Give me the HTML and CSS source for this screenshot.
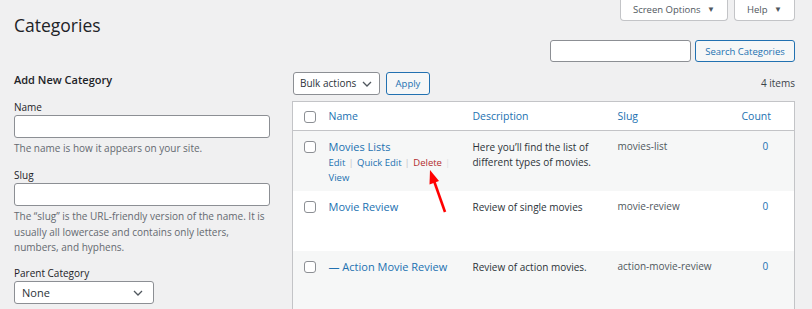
FILE: index.html
```html
<!DOCTYPE html>
<html lang="en">
<head>
    <meta charset="UTF-8">
    <title>Categories</title>
    <link rel="stylesheet" href="styles.css">
</head>
<body>

<div class="wrap">
    <div class="top">
        <h1>Categories</h1>
        <div class="top-right">
            <div class="meta-links">
                <button class="meta-tab">Screen Options <span class="tri">&#9660;</span></button>
                <button class="meta-tab help">Help <span class="tri">&#9660;</span></button>
            </div>
            <div class="search-box">
                <input type="text" class="search-input">
                <button class="btn btn-outline">Search Categories</button>
            </div>
        </div>
    </div>

    <div class="columns">
        <div class="col-left">
            <h2>Add New Category</h2>
            <div class="field">
                <label>Name</label>
                <input type="text" class="text-input">
                <p class="description">The name is how it appears on your site.</p>
            </div>
            <div class="field field-slug">
                <label>Slug</label>
                <input type="text" class="text-input">
                <p class="description">The “slug” is the URL-friendly version of the name. It is usually all lowercase and contains only letters, numbers, and hyphens.</p>
            </div>
            <div class="field">
                <label>Parent Category</label>
                <div class="select select-parent">
                    <span>None</span>
                    <svg width="10" height="6" viewBox="0 0 10 6"><path d="M1 1l4 4 4-4" fill="none" stroke="#50575e" stroke-width="1.3"/></svg>
                </div>
            </div>
        </div>

        <div class="col-right">
            <div class="tablenav">
                <div class="select select-bulk">
                    <span>Bulk actions</span>
                    <svg width="10" height="6" viewBox="0 0 10 6"><path d="M1 1l4 4 4-4" fill="none" stroke="#50575e" stroke-width="1.3"/></svg>
                </div>
                <button class="btn btn-outline btn-apply">Apply</button>
                <span class="count-items">4 items</span>
            </div>

            <table class="list-table">
                <colgroup>
                    <col class="c-cb">
                    <col class="c-name">
                    <col class="c-desc">
                    <col class="c-slug">
                    <col class="c-count">
                </colgroup>
                <thead>
                    <tr>
                        <th class="cb"><span class="check"></span></th>
                        <th><a href="#">Name</a></th>
                        <th><a href="#">Description</a></th>
                        <th><a href="#">Slug</a></th>
                        <th><a href="#">Count</a></th>
                    </tr>
                </thead>
                <tbody>
                    <tr class="alt">
                        <td class="cb"><span class="check"></span></td>
                        <td>
                            <a href="#" class="row-title">Movies Lists</a>
                            <div class="row-actions">
                                <span class="act"><a href="#">Edit</a><span class="sep">|</span></span>
                                <span class="act"><a href="#">Quick Edit</a><span class="sep">|</span></span>
                                <span class="act"><a href="#" class="delete">Delete</a><span class="sep dotted">|</span></span>
                                <span class="act"><a href="#">View</a></span>
                            </div>
                        </td>
                        <td class="desc">Here you’ll find the list of different types of movies.</td>
                        <td class="slug">movies-list</td>
                        <td class="num"><a href="#">0</a></td>
                    </tr>
                    <tr>
                        <td class="cb"><span class="check"></span></td>
                        <td>
                            <a href="#" class="row-title">Movie Review</a>
                            <div class="row-actions hidden">
                                <span class="act"><a href="#">Edit</a><span class="sep">|</span></span>
                                <span class="act"><a href="#">Quick Edit</a><span class="sep">|</span></span>
                                <span class="act"><a href="#">Delete</a><span class="sep">|</span></span>
                                <span class="act"><a href="#">View</a></span>
                            </div>
                        </td>
                        <td class="desc">Review of single movies</td>
                        <td class="slug">movie-review</td>
                        <td class="num"><a href="#">0</a></td>
                    </tr>
                    <tr class="alt">
                        <td class="cb"><span class="check"></span></td>
                        <td>
                            <a href="#" class="row-title">— Action Movie Review</a>
                            <div class="row-actions hidden">
                                <span class="act"><a href="#">Edit</a><span class="sep">|</span></span>
                                <span class="act"><a href="#">Quick Edit</a><span class="sep">|</span></span>
                                <span class="act"><a href="#">Delete</a><span class="sep">|</span></span>
                                <span class="act"><a href="#">View</a></span>
                            </div>
                        </td>
                        <td class="desc">Review of action movies.</td>
                        <td class="slug">action-movie-review</td>
                        <td class="num"><a href="#">0</a></td>
                    </tr>
                </tbody>
            </table>
        </div>
    </div>
</div>

<!-- red annotation arrow drawn over the screenshot -->
<svg class="arrow" width="812" height="309" viewBox="0 0 812 309">
    <line x1="445" y1="212" x2="433" y2="178" stroke="#f00" stroke-width="2.6"/>
    <polygon points="430,170 439,181 429.5,184.5" fill="#f00"/>
</svg>

</body>
</html>
```

FILE: styles.css
```css
* {
    margin: 0;
    padding: 0;
    box-sizing: border-box;
}

body {
    font-family: 'Open Sans', 'Noto Sans', sans-serif;
    font-size: 10px;
    line-height: 15px;
    background-color: #f0f0f1;
    color: #3c434a;
    position: relative;
    width: 812px;
    height: 309px;
    overflow: hidden;
}

a {
    color: #2271b1;
    text-decoration: none;
}

button {
    font-family: inherit;
}

.wrap {
    padding: 0 17px 0 14px;
}

/* header area */

.top {
    display: flex;
    justify-content: space-between;
    align-items: flex-start;
    height: 70px;
}

h1 {
    font-size: 17.5px;
    font-weight: 400;
    color: #1d2327;
    line-height: 24px;
    margin-top: 13px;
}

.top-right {
    display: flex;
    flex-direction: column;
    align-items: flex-end;
}

.meta-links {
    display: flex;
    gap: 6px;
    margin-top: -1px;
}

.meta-tab {
    height: 22px;
    background: #fff;
    border: 1px solid #c3c4c7;
    border-top: none;
    border-radius: 0 0 4px 4px;
    color: #50575e;
    font-size: 9.5px;
    padding: 0;
    width: 108px;
}

.meta-tab.help {
    width: 61px;
}

.tri {
    font-size: 8px;
    margin-left: 4px;
    vertical-align: 1px;
}

.search-box {
    display: flex;
    gap: 4px;
    margin-top: 19px;
}

.search-input {
    width: 141px;
    height: 22px;
    border: 1px solid #8c8f94;
    border-radius: 3px;
    background: #fff;
}

.btn {
    height: 22px;
    border-radius: 3px;
    font-size: 9.5px;
    cursor: pointer;
}

.btn-outline {
    background: #f6f7f7;
    border: 1px solid #2271b1;
    color: #2271b1;
    width: 100px;
}

/* two columns */

.columns {
    display: flex;
    gap: 22px;
}

.col-left {
    width: 256px;
    flex: none;
}

.col-right {
    flex: 1;
}

h2 {
    font-size: 11px;
    font-weight: 600;
    color: #1d2327;
    line-height: 20px;
    margin-bottom: 10px;
}

.field {
    margin-bottom: 12px;
}

.field-slug {
    margin-bottom: 11px;
}

.field label {
    display: block;
    color: #1d2327;
    line-height: 14px;
    margin-bottom: 1px;
}

.text-input {
    display: block;
    width: 100%;
    height: 23px;
    border: 1px solid #8c8f94;
    border-radius: 3px;
    background: #fff;
}

.description {
    color: #646970;
    margin-top: 3px;
    line-height: 15.3px;
}

.select {
    display: flex;
    align-items: center;
    justify-content: space-between;
    height: 23px;
    background: #fff;
    border: 1px solid #8c8f94;
    border-radius: 3px;
    color: #2c3338;
    font-size: 10px;
}

.select-parent {
    width: 140px;
    padding: 0 10px 0 7px;
    font-size: 11px;
}

.select-bulk {
    width: 87px;
    padding: 0 7px 0 6px;
}

/* table */

.tablenav {
    display: flex;
    align-items: center;
    gap: 6px;
    margin-top: 2px;
    margin-left: 1px;
}

.btn-apply {
    width: 44px;
    height: 23px;
}

.count-items {
    margin-left: auto;
    color: #3c434a;
}

.list-table {
    width: 100%;
    margin-top: 6px;
    border: 1px solid #c3c4c7;
    border-collapse: collapse;
    table-layout: fixed;
    background: #fff;
}

.c-cb { width: 28px; }
.c-name { width: 144px; }
.c-desc { width: 145px; }
.c-slug { width: 124px; }

th {
    text-align: left;
    font-weight: 400;
    font-size: 10.5px;
    height: 29px;
    padding: 0 8px;
    border-bottom: 1px solid #c3c4c7;
}

td {
    vertical-align: top;
    padding: 8px 8px 6px;
}

tr.alt td {
    background: #f6f7f7;
}

tbody tr td {
    height: 60px;
}

th.cb,
td.cb {
    padding: 0 0 0 11px;
}

th.cb {
    vertical-align: middle;
}

td.cb {
    padding-top: 10px;
}

.check {
    display: block;
    width: 12px;
    height: 12px;
    border: 1px solid #8c8f94;
    border-radius: 3px;
    background: #fff;
}

th .check {
    margin-top: 1px;
}

.row-title {
    font-size: 11px;
    font-weight: 500;
    line-height: 16px;
    display: block;
}

.row-actions {
    font-size: 9.5px;
    line-height: 15px;
}

.act {
    white-space: nowrap;
}

.row-actions.hidden {
    visibility: hidden;
}

.sep {
    color: #c3c4c7;
    margin: 0 1px 0 3px;
}

.sep.dotted {
    color: #e0e0e2;
}

.delete {
    color: #b32d2e;
}

.desc {
    color: #2c3338;
    padding-top: 9px;
}

.slug {
    color: #50575e;
}

td.num {
    padding-left: 29px;
}

.arrow {
    position: absolute;
    top: 0;
    left: 0;
    pointer-events: none;
}
```
